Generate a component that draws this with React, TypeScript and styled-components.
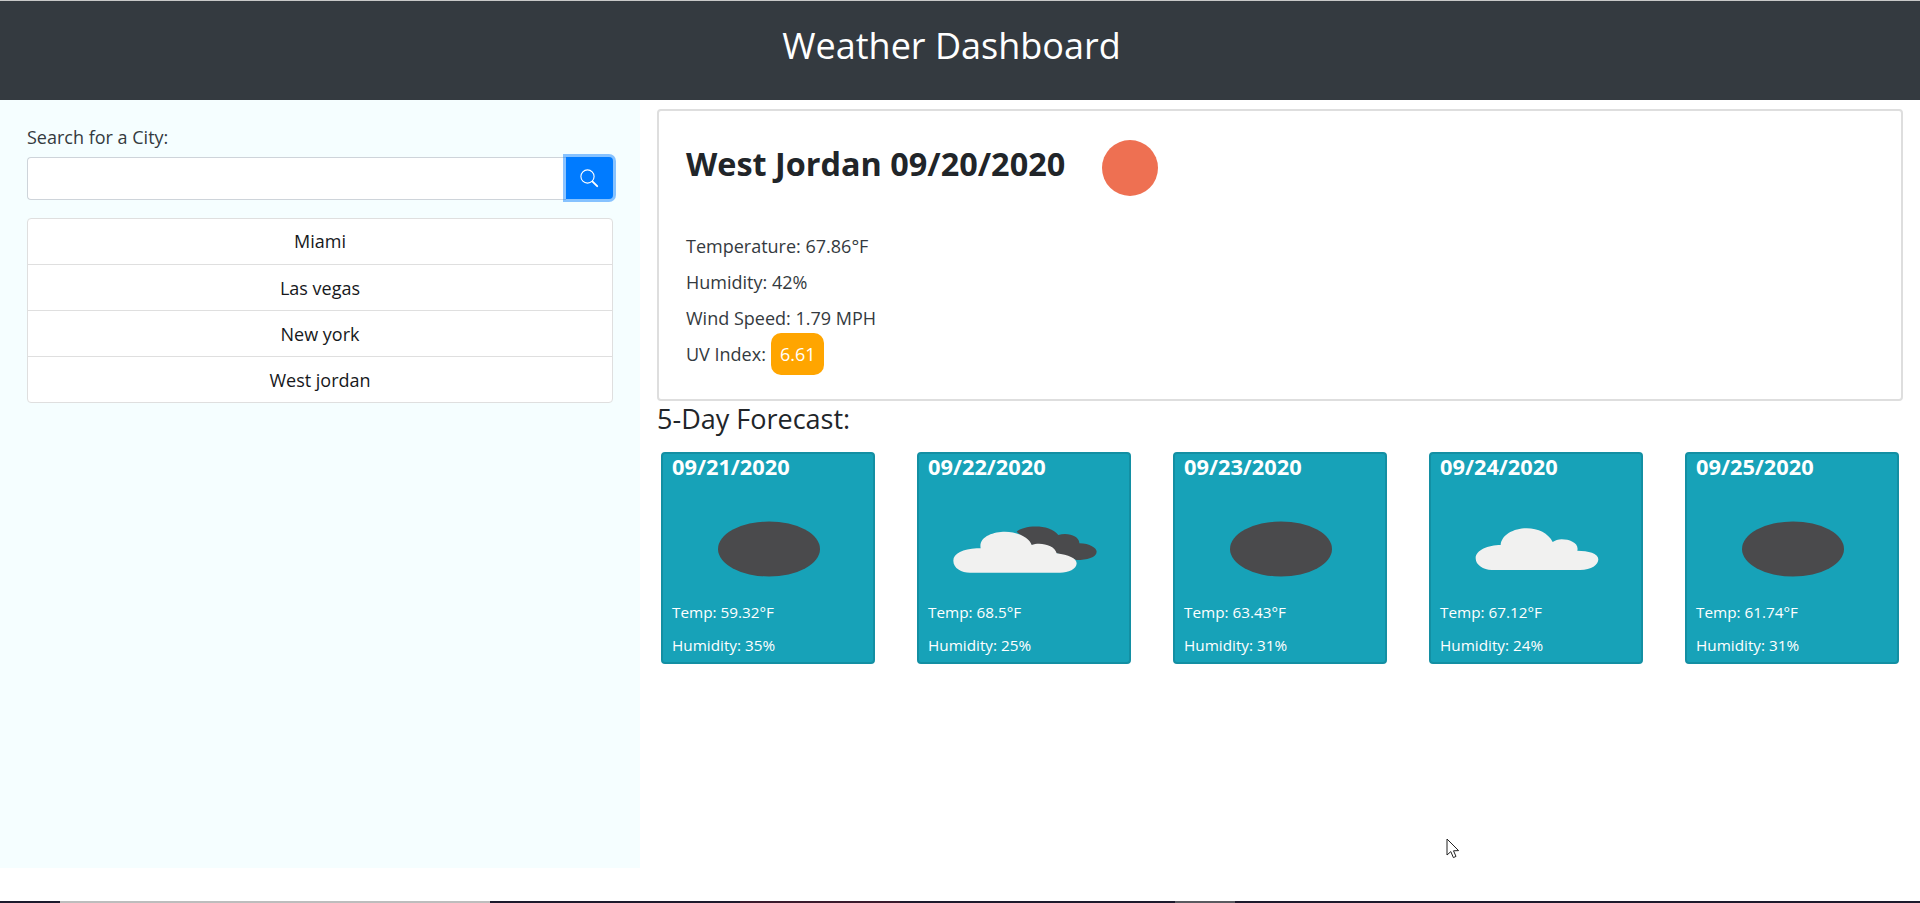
import React from 'react';
import styled, { createGlobalStyle } from 'styled-components';

const Global = createGlobalStyle`
  html, body { margin: 0; padding: 0; background: #fff; overflow: hidden; }
  body { font-family: "Open Sans", "Noto Sans", sans-serif; font-size: 18px; line-height: 24px; color: #212529; }
  * { box-sizing: border-box; }
`;

const Page = styled.div`
  position: relative;
  width: 1920px;
  height: 903px;
  display: flex;
  flex-direction: column;
`;

const Header = styled.header`
  height: 100px;
  flex: none;
  border-top: 1px solid #c8c8c8;
  background: #343a40;
  display: flex;
  align-items: center;
  justify-content: center;
  padding: 0 17px 10px 0;
`;

const Title = styled.h1`
  margin: 0;
  font-size: 36px;
  line-height: 54px;
  font-weight: 400;
  color: #fff;
`;

const Body = styled.div`
  display: flex;
  height: 768px;
  flex: none;
`;

const Sidebar = styled.aside`
  width: 640px;
  flex: none;
  background: #f5feff;
  padding: 25px 27px 0;
`;

const Label = styled.label`
  display: block;
  height: 32px;
  line-height: 24px;
  color: #343a40;
`;

const SearchRow = styled.div`
  display: flex;
  width: 586px;
  height: 43px;
`;

const SearchInput = styled.input`
  flex: 1;
  min-width: 0;
  height: 43px;
  border: 1px solid #ced4da;
  border-right: 0;
  border-radius: 4px 0 0 4px;
  background: #fff;
`;

const SearchButton = styled.button`
  width: 47px;
  height: 42px;
  flex: none;
  border: 0;
  padding: 0 2px 0 0;
  border-radius: 0 4px 4px 0;
  background: #007bff;
  box-shadow: 0 0 0 3px rgba(0, 123, 255, 0.45);
  display: flex;
  align-items: center;
  justify-content: center;
`;

const CityList = styled.ul`
  list-style: none;
  margin: 18px 0 0;
  padding: 0;
  width: 586px;
  background: #fff;
  border: 1px solid #dfdfdf;
  border-radius: 4px;
`;

const City = styled.li`
  height: 46px;
  line-height: 46px;
  text-align: center;
  color: #16181b;
  border-top: 1px solid #dfdfdf;
  &:first-child { border-top: 0; height: 45px; line-height: 44px; }
`;

const Main = styled.main`
  flex: 1;
  padding: 9px 17px 0;
`;

const CurrentCard = styled.section`
  height: 292px;
  border: 2px solid #dedede;
  border-radius: 4px;
  padding: 19px 27px 0;
`;

const CurrentHead = styled.div`
  display: flex;
  align-items: flex-start;
  height: 104px;
`;

const CityTitle = styled.h2`
  margin: 9px 0 0;
  font-size: 32.4px;
  line-height: 48px;
  font-weight: 700;
  color: #212529;
`;

const Sun = styled.span`
  display: block;
  width: 56px;
  height: 56px;
  margin: 10px 0 0 37px;
  border-radius: 50%;
  background: #ee7052;
`;

const Stat = styled.p`
  display: flex;
  align-items: center;
  margin: 0 0 12px;
  height: 24px;
  color: #343a40;
  white-space: nowrap;
`;

const UvBadge = styled.span`
  flex: none;
  margin-left: 5px;
  padding: 8px 9px;
  line-height: 26px;
  border-radius: 10px;
  background: #ffa500;
  color: #fff;
`;

const ForecastTitle = styled.h3`
  margin: 0;
  height: 36px;
  font-size: 27px;
  line-height: 36px;
  font-weight: 400;
  color: #212529;
`;

const ForecastRow = styled.div`
  display: flex;
  gap: 42px;
  margin: 15px 0 0 4px;
`;

const DayCard = styled.article`
  width: 214px;
  height: 212px;
  flex: none;
  background: #17a2b8;
  border: 2px solid #138fa3;
  border-radius: 4px;
  padding: 0 9px;
  color: #fff;
`;

const DayDate = styled.div`
  font-size: 21.8px;
  line-height: 26px;
  font-weight: 700;
`;

const IconBox = styled.div`
  height: 90px;
  margin: 22px -10px 0 -10px;
  padding-left: 1px;
  display: flex;
  justify-content: center;
  filter: blur(0.35px);
`;

const DayLine = styled.div<{ $gap: number }>`
  font-size: 15.3px;
  line-height: 21px;
  margin-top: ${(p) => p.$gap}px;
`;

const Strip = styled.div`
  position: absolute;
  left: 0;
  right: 0;
  bottom: 0;
  height: 2px;
  display: flex;
`;

const StripPart = styled.i<{ $w: number; $c: string }>`
  display: block;
  flex: ${(p) => (p.$w ? `0 0 ${p.$w}px` : '1')};
  background: ${(p) => p.$c};
`;

const Pointer = styled.svg`
  position: absolute;
  left: 1446px;
  top: 838px;
`;

const Oval = () => (
  <svg width="170" height="90" viewBox="0 0 170 90">
    <ellipse cx="85" cy="47" rx="51" ry="27.5" fill="#4a4a4c" />
  </svg>
);

const CloudOver = () => (
  <svg width="170" height="90" viewBox="0 0 170 90">
    <g transform="translate(0 -2) scale(0.3333)">
      <path d="M230 95C250 75 330 70 355 105C385 95 420 110 418 130C450 130 470 145 470 155C470 172 440 180 410 180L350 160L275 135Z" fill="#4a4a4c" />
      <path d="M90 218L360 218C385 218 410 208 410 190C410 175 385 165 350 160C345 135 300 125 275 135C270 115 235 95 195 95C160 95 115 110 122 145L110 145C70 147 40 160 40 182C40 205 65 218 90 218Z" fill="#f1f1f0" />
    </g>
  </svg>
);

const CloudFew = () => (
  <svg width="170" height="90" viewBox="0 0 170 90">
    <g transform="translate(8 8) scale(0.3333)">
      <path d="M95 180L360 180C395 180 415 165 415 148C415 130 385 122 352 122C358 100 330 88 305 88C295 88 285 92 278 96C265 70 235 55 200 55C160 55 125 75 122 105C85 105 47 120 47 145C47 165 70 180 95 180Z" fill="#f1f1f0" />
    </g>
  </svg>
);

const days = [
  { date: '09/21/2020', temp: '59.32', hum: '35', Icon: Oval },
  { date: '09/22/2020', temp: '68.5', hum: '25', Icon: CloudOver },
  { date: '09/23/2020', temp: '63.43', hum: '31', Icon: Oval },
  { date: '09/24/2020', temp: '67.12', hum: '24', Icon: CloudFew },
  { date: '09/25/2020', temp: '61.74', hum: '31', Icon: Oval },
];

const stripParts: [number, string][] = [
  [60, '#1c1a2c'],
  [430, '#bdbdbd'],
  [250, '#1d1a2c'],
  [160, '#3a1a2c'],
  [275, '#1d1a2c'],
  [60, '#5a5a60'],
  [0, '#1d1a2c'],
];

export default function App() {
  return (
    <Page>
      <Global />
      <Header>
        <Title>Weather Dashboard</Title>
      </Header>
      <Body>
        <Sidebar>
          <Label htmlFor="city">Search for a City:</Label>
          <SearchRow>
            <SearchInput id="city" />
            <SearchButton aria-label="Search">
              <svg width="20" height="20" viewBox="0 0 20 20" fill="none" stroke="#fff">
                <circle cx="8.5" cy="8.5" r="6.6" strokeWidth="1.1" />
                <path d="M13.6 13.6L18.2 18.2" strokeWidth="1.9" strokeLinecap="round" />
              </svg>
            </SearchButton>
          </SearchRow>
          <CityList>
            {['Miami', 'Las vegas', 'New york', 'West jordan'].map((c) => (
              <City key={c}>{c}</City>
            ))}
          </CityList>
        </Sidebar>
        <Main>
          <CurrentCard>
            <CurrentHead>
              <CityTitle>West Jordan 09/20/2020</CityTitle>
              <Sun />
            </CurrentHead>
            <Stat>Temperature: 67.86°F</Stat>
            <Stat>Humidity: 42%</Stat>
            <Stat>Wind Speed: 1.79 MPH</Stat>
            <Stat>
              UV Index:<UvBadge>6.61</UvBadge>
            </Stat>
          </CurrentCard>
          <ForecastTitle>5-Day Forecast:</ForecastTitle>
          <ForecastRow>
            {days.map(({ date, temp, hum, Icon }) => (
              <DayCard key={date}>
                <DayDate>{date}</DayDate>
                <IconBox>
                  <Icon />
                </IconBox>
                <DayLine $gap={10}>Temp: {temp}°F</DayLine>
                <DayLine $gap={12}>Humidity: {hum}%</DayLine>
              </DayCard>
            ))}
          </ForecastRow>
        </Main>
      </Body>
      <Strip>
        {stripParts.map(([w, c], i) => (
          <StripPart key={i} $w={w} $c={c} />
        ))}
      </Strip>
      <Pointer width="14" height="22" viewBox="0 0 14 22">
        <path d="M1 1L1 17L4.8 13.6L7.4 19.6L10 18.4L7.5 12.8L12.6 12.6Z" fill="#fff" stroke="#222" strokeWidth="1" strokeLinejoin="round" />
      </Pointer>
    </Page>
  );
}
